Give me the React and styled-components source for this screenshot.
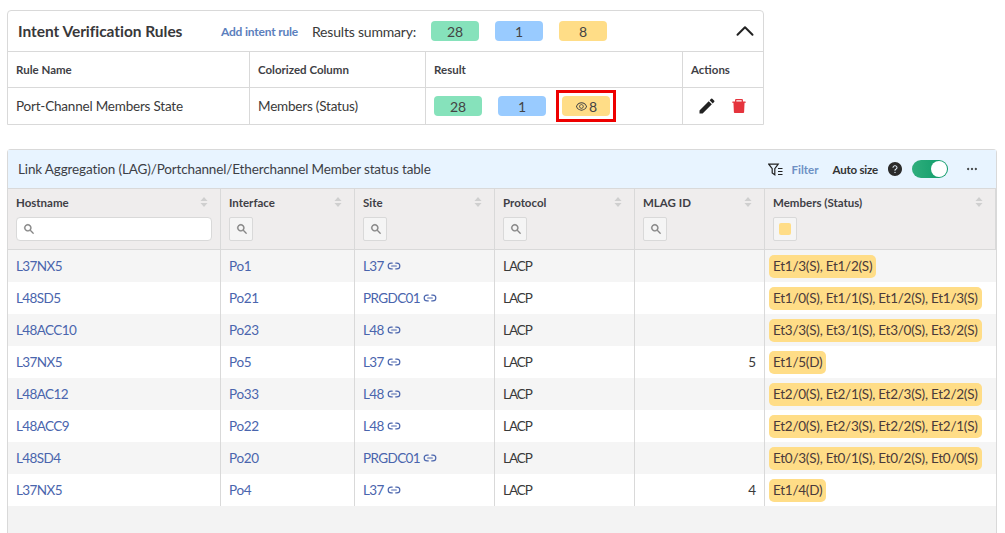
import React from "react";
import styled, { createGlobalStyle } from "styled-components";
import {
  AiFillDelete,
  AiFillQuestionCircle,
  AiOutlineEllipsis,
  AiOutlineEye,
  AiOutlineSearch,
} from "react-icons/ai";
import { MdEdit } from "react-icons/md";
import { ChevronUp, Link2 } from "lucide-react";

const GlobalStyle = createGlobalStyle`
  html, body { margin: 0; padding: 0; background: #fff; }
  body { font-family: "Lato", "Noto Sans", sans-serif; color: #3a3a3a; height: 533px; overflow: hidden; }
`;

const Page = styled.div`
  display: flex;
  flex-direction: column;
  gap: 24px;
  padding: 10px 8px 0 7px;
  height: 523px;
`;

const RulesCard = styled.section`
  width: 757px;
  box-sizing: border-box;
  border: 1px solid #d9d9d9;
  border-radius: 4px 4px 0 0;
`;

const RulesHeader = styled.header`
  height: 40px;
  display: flex;
  align-items: center;
  padding: 0 10px;
  border-bottom: 1px solid #d9d9d9;
`;

const Title = styled.h2`
  margin: 0;
  width: 203px;
  font-size: 15.5px;
  font-weight: 700;
  letter-spacing: -0.04px;
  color: #38383a;
`;

const AddLink = styled.a`
  width: 91px;
  font-size: 12px;
  font-weight: 700;
  letter-spacing: -0.2px;
  color: #5b80bd;
`;

const SummaryLabel = styled.span`
  width: 119px;
  font-size: 14px;
  letter-spacing: -0.2px;
  color: #3a3a3a;
`;

const Collapse = styled.span`
  margin-left: auto;
  margin-right: -7px;
  display: flex;
  color: #222;
`;

const Pills = styled.div`
  display: flex;
  gap: 16px;
`;

const Pill = styled.span`
  position: relative;
  width: 48px;
  height: 20px;
  border-radius: 4px;
  display: flex;
  align-items: center;
  justify-content: center;
  gap: 1px;
  font-size: 14px;
  color: #444;
  background: ${({ $tone }) => ({ green: "#86e2bb", blue: "#99cbff", yellow: "#ffdd87" })[$tone]};
`;

const Marker = styled.span`
  position: absolute;
  inset: -6px;
  border: 3px solid #ee0000;
`;

const RulesRow = styled.div`
  display: grid;
  grid-template-columns: 242px 176px 257px 80px;
  height: ${({ $height }) => $height}px;
  border-bottom: ${({ $last }) => ($last ? "0" : "1px solid #d9d9d9")};
`;

const RulesCell = styled.div`
  display: flex;
  align-items: center;
  box-sizing: border-box;
  padding: 0 8px;
  border-right: 1px solid #d9d9d9;
  font-size: 13.5px;
  letter-spacing: -0.2px;
  ${({ $head }) => $head && "font-size: 11.5px; font-weight: 700; letter-spacing: 0; color: #3f3f46;"}
  &:last-child { border-right: 0; }
`;

const ActionCell = styled(RulesCell)`
  gap: 13px;
  padding-left: 14px;
`;

const TableCard = styled.section`
  width: 990px;
  flex: 1;
  box-sizing: border-box;
  border: 1px solid #d9d9d9;
  border-bottom: 0;
  border-radius: 4px 4px 0 0;
  background: #f3f3f3;
`;

const TableBar = styled.header`
  height: 38px;
  display: flex;
  align-items: center;
  padding: 0 17px 0 10px;
  background: #e8f4ff;
  border-bottom: 1px solid #d9d9d9;
  font-size: 13.5px;
  letter-spacing: -0.14px;
  color: #3d3f46;
`;

const BarTools = styled.div`
  margin-left: auto;
  display: flex;
  align-items: center;
  letter-spacing: 0;
`;

const FilterLabel = styled.span`
  margin: 0 14px 0 9px;
  font-size: 11.5px;
  font-weight: 700;
  color: #6d90c4;
`;

const AutoSize = styled.span`
  font-size: 11.5px;
  font-weight: 700;
  letter-spacing: -0.2px;
  color: #333;
  margin-right: 9px;
`;

const Help = styled.span`
  display: flex;
  font-size: 16px;
  color: #2b2b2b;
  margin-right: 9px;
`;

const Toggle = styled.span`
  position: relative;
  display: block;
  width: 36px;
  height: 18px;
  border-radius: 9px;
  background: linear-gradient(90deg, #2fae7c, #0c9a68);
  &::after {
    content: "";
    position: absolute;
    top: 1px;
    right: 1px;
    width: 16px;
    height: 16px;
    border-radius: 50%;
    background: #fff;
  }
`;

const More = styled.span`
  display: flex;
  margin-left: 17px;
  font-size: 14px;
  color: #222;
  svg { stroke: #222; stroke-width: 50; }
`;

const Grid = styled.div`
  display: grid;
  grid-template-columns: 213px 134px 140px 140px 130px 231px;
`;

const HeadCell = styled.div`
  height: 61px;
  box-sizing: border-box;
  padding: 6px 8px 0;
  background: #efeded;
  border-right: 1px solid #d9d9d9;
  border-bottom: 1px solid #d9d9d9;
  &:last-child { border-right: 0; }
`;

const HeadTop = styled.div`
  display: flex;
  align-items: center;
  justify-content: space-between;
  height: 14px;
  font-size: 11.5px;
  font-weight: 700;
  color: #3f3f46;
`;

const SortMark = styled.svg`
  margin-right: 4px;
  fill: #cfcfcf;
`;

const SearchBox = styled.div`
  margin-top: 8px;
  box-sizing: border-box;
  width: ${({ $wide }) => ($wide ? "196px" : "24px")};
  height: 24px;
  display: flex;
  align-items: center;
  padding-left: 6px;
  background: ${({ $wide }) => ($wide ? "#fff" : "#f5f5f5")};
  border: 1px solid #d9d9d9;
  border-radius: ${({ $wide }) => ($wide ? "4px" : "2px")};
  font-size: 12px;
  color: #7d7d7d;
  svg { stroke: #7d7d7d; stroke-width: 40; }
`;

const Swatch = styled.span`
  width: 12px;
  height: 12px;
  margin-left: -1px;
  border-radius: 2px;
  background: #ffdd87;
`;

const Cell = styled.div`
  height: 32px;
  box-sizing: border-box;
  display: flex;
  align-items: center;
  justify-content: ${({ $right }) => ($right ? "flex-end" : "flex-start")};
  padding: 0 8px;
  font-size: 13.5px;
  letter-spacing: ${({ $tight }) => $tight || 0}px;
  background: ${({ $odd }) => ($odd ? "#f5f5f5" : "#fff")};
  border-right: 1px solid #d9d9d9;
  &:nth-child(6n) { border-right: 0; }
`;

const RowLink = styled.a`
  display: inline-flex;
  align-items: center;
  gap: 3px;
  color: #4a65ad;
`;

const Badge = styled.span`
  margin-left: -4px;
  padding: 0 4px;
  height: 23px;
  display: flex;
  align-items: center;
  white-space: nowrap;
  border-radius: 5px;
  background: #ffdd87;
  color: #4a3a3a;
`;

const columns = ["Hostname", "Interface", "Site", "Protocol", "MLAG ID", "Members (Status)"];

const rows = [
  ["L37NX5", "Po1", "L37", "", "Et1/3(S), Et1/2(S)"],
  ["L48SD5", "Po21", "PRGDC01", "", "Et1/0(S), Et1/1(S), Et1/2(S), Et1/3(S)"],
  ["L48ACC10", "Po23", "L48", "", "Et3/3(S), Et3/1(S), Et3/0(S), Et3/2(S)"],
  ["L37NX5", "Po5", "L37", "5", "Et1/5(D)"],
  ["L48AC12", "Po33", "L48", "", "Et2/0(S), Et2/1(S), Et2/3(S), Et2/2(S)"],
  ["L48ACC9", "Po22", "L48", "", "Et2/0(S), Et2/3(S), Et2/2(S), Et2/1(S)"],
  ["L48SD4", "Po20", "PRGDC01", "", "Et0/3(S), Et0/1(S), Et0/2(S), Et0/0(S)"],
  ["L37NX5", "Po4", "L37", "4", "Et1/4(D)"],
];

const FilterIcon = () => (
  <svg width="15" height="13" viewBox="0 0 15 13" fill="none" stroke="#222" strokeWidth="1.2">
    <path d="M.8 1.2h9.4L6.8 5.6v6.2L4.2 10V5.6z" />
    <path d="M10 5.5h4.5M10 8.5h4.5M10 11.5h4.5" />
  </svg>
);

const SortIcon = () => (
  <SortMark width="8" height="10" viewBox="0 0 8 10">
    <path d="M4 0l3.5 4h-7zM4 10L.5 6h7z" />
  </SortMark>
);

const App = () => (
  <>
    <GlobalStyle />
    <Page>
      <RulesCard>
        <RulesHeader>
          <Title>Intent Verification Rules</Title>
          <AddLink>Add intent rule</AddLink>
          <SummaryLabel>Results summary:</SummaryLabel>
          <Pills>
            <Pill $tone="green">28</Pill>
            <Pill $tone="blue">1</Pill>
            <Pill $tone="yellow">8</Pill>
          </Pills>
          <Collapse><ChevronUp size={30} strokeWidth={1.6} /></Collapse>
        </RulesHeader>
        <RulesRow $height={35}>
          <RulesCell $head>Rule Name</RulesCell>
          <RulesCell $head>Colorized Column</RulesCell>
          <RulesCell $head>Result</RulesCell>
          <RulesCell $head>Actions</RulesCell>
        </RulesRow>
        <RulesRow $height={36} $last>
          <RulesCell>Port-Channel Members State</RulesCell>
          <RulesCell>Members (Status)</RulesCell>
          <RulesCell>
            <Pills>
              <Pill $tone="green">28</Pill>
              <Pill $tone="blue">1</Pill>
              <Pill $tone="yellow">
                <AiOutlineEye size={13} />8
                <Marker />
              </Pill>
            </Pills>
          </RulesCell>
          <ActionCell>
            <MdEdit size={20} color="#222" />
            <AiFillDelete size={18} color="#e5343d" />
          </ActionCell>
        </RulesRow>
      </RulesCard>

      <TableCard>
        <TableBar>
          Link Aggregation (LAG)/Portchannel/Etherchannel Member status table
          <BarTools>
            <FilterIcon />
            <FilterLabel>Filter</FilterLabel>
            <AutoSize>Auto size</AutoSize>
            <Help><AiFillQuestionCircle /></Help>
            <Toggle />
            <More><AiOutlineEllipsis /></More>
          </BarTools>
        </TableBar>
        <Grid>
          {columns.map((name, i) => (
            <HeadCell key={name}>
              <HeadTop>
                {name}
                <SortIcon />
              </HeadTop>
              <SearchBox $wide={i === 0}>
                {i === 5 ? <Swatch /> : <AiOutlineSearch />}
              </SearchBox>
            </HeadCell>
          ))}
          {rows.map(([host, port, site, mlag, members], i) => (
            <React.Fragment key={host + port}>
              <Cell $odd={i % 2 === 0} $tight={-0.6}><RowLink>{host}</RowLink></Cell>
              <Cell $odd={i % 2 === 0} $tight={-0.3}><RowLink>{port}</RowLink></Cell>
              <Cell $odd={i % 2 === 0} $tight={-0.6}><RowLink>{site}<Link2 size={14} /></RowLink></Cell>
              <Cell $odd={i % 2 === 0} $tight={-1}>LACP</Cell>
              <Cell $odd={i % 2 === 0} $right>{mlag}</Cell>
              <Cell $odd={i % 2 === 0} $tight={-0.25}><Badge>{members}</Badge></Cell>
            </React.Fragment>
          ))}
        </Grid>
      </TableCard>
    </Page>
  </>
);

export default App;
